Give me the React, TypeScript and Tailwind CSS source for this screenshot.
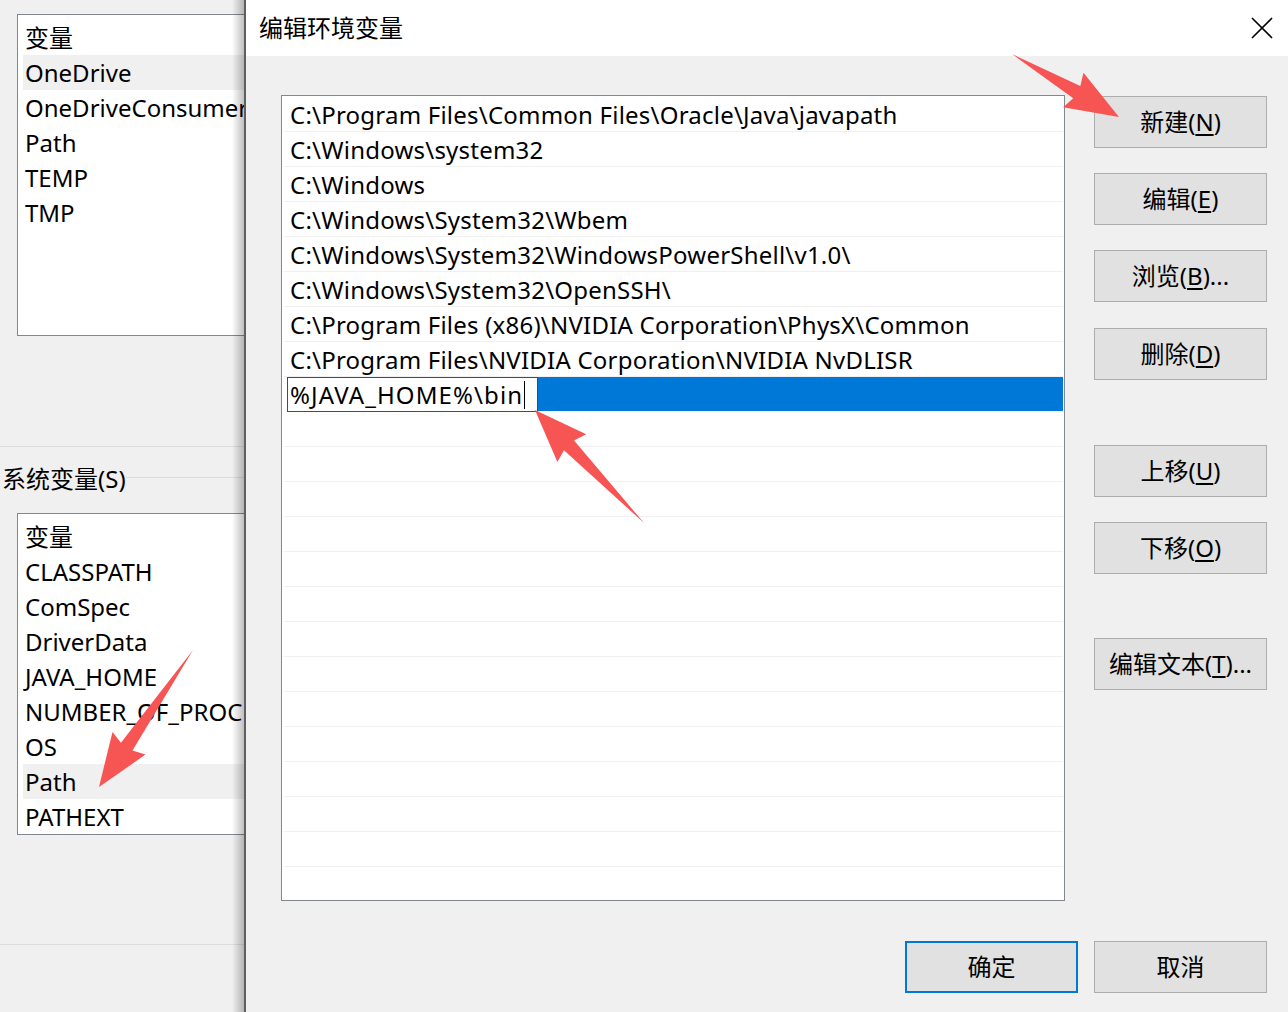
import React from "react";

const FONT = { fontFamily: '"Noto Sans", "Noto Sans CJK SC", sans-serif' };

const userVars = ["OneDrive", "OneDriveConsumer", "Path", "TEMP", "TMP"];
const sysVars = ["CLASSPATH", "ComSpec", "DriverData", "JAVA_HOME", "NUMBER_OF_PROCESSORS", "OS", "Path", "PATHEXT"];

const paths = [
  "C:\\Program Files\\Common Files\\Oracle\\Java\\javapath",
  "C:\\Windows\\system32",
  "C:\\Windows",
  "C:\\Windows\\System32\\Wbem",
  "C:\\Windows\\System32\\WindowsPowerShell\\v1.0\\",
  "C:\\Windows\\System32\\OpenSSH\\",
  "C:\\Program Files (x86)\\NVIDIA Corporation\\PhysX\\Common",
  "C:\\Program Files\\NVIDIA Corporation\\NVIDIA NvDLISR",
];

function VarList({ items, selected }: { items: string[]; selected: string }) {
  return (
    <div className="ml-[17px] w-[400px] h-[322px] border border-[#828790] bg-white pt-[5px] pl-[5px]">
      <div className="h-[35px] leading-[35px] pl-[2px] whitespace-nowrap">变量</div>
      {items.map((v) => (
        <div
          key={v}
          className={`h-[35px] leading-[35px] pl-[2px] whitespace-nowrap ${v === selected ? "bg-[#f0f0f0]" : ""}`}
        >
          {v}
        </div>
      ))}
    </div>
  );
}

function Btn({
  label,
  mn,
  tail = "",
  className = "",
  focused = false,
}: {
  label: string;
  mn?: string;
  tail?: string;
  className?: string;
  focused?: boolean;
}) {
  return (
    <div
      className={`w-[173px] h-[52px] flex items-center justify-center bg-[#e1e1e1] text-[24px] ${
        focused ? "border-2 border-[#0078d7]" : "border border-[#adadad]"
      } ${className}`}
    >
      {label}
      {mn && (
        <>
          (<span className="underline underline-offset-[3px]">{mn}</span>){tail}
        </>
      )}
    </div>
  );
}

function Arrow({ x1, y1, x2, y2 }: { x1: number; y1: number; x2: number; y2: number }) {
  const L = Math.hypot(x2 - x1, y2 - y1);
  const a = (Math.atan2(y2 - y1, x2 - x1) * 180) / Math.PI;
  const pts = `0,0 ${L - 49},-7 ${L - 53},-20 ${L},0 ${L - 53},20 ${L - 49},7`;
  return <polygon points={pts} fill="#f75454" transform={`translate(${x1} ${y1}) rotate(${a})`} />;
}

export default function App() {
  return (
    <div className="relative w-[1288px] h-[1012px] overflow-hidden bg-[#f0f0f0] flex text-black" style={FONT}>
      {/* background window */}
      <div className="relative w-[244px] shrink-0 overflow-hidden text-[24px]">
        <div className="pt-[14px]">
          <VarList items={userVars} selected="OneDrive" />
        </div>
        <div className="mt-[110px] border-t border-[#dcdcdc]" />
        <div className="mt-[16px] flex items-center">
          <span className="pl-[2px] leading-[32px] whitespace-nowrap">系统变量(S)</span>
          <div className="flex-1 border-t border-[#dcdcdc] -mt-[4px]" />
        </div>
        <div className="mt-[18px]">
          <VarList items={sysVars} selected="Path" />
        </div>
        <div className="mt-[109px] border-t border-[#dcdcdc]" />
        <div className="absolute top-0 right-0 h-full w-[12px] bg-gradient-to-r from-transparent to-black/25" />
      </div>
      <div className="w-[2px] shrink-0 bg-[#5f5f5f]" />

      {/* dialog */}
      <div className="flex-1 flex flex-col">
        <div className="h-[56px] bg-white flex items-center justify-between pl-[13px] pr-[15px]">
          <span className="text-[24px]">编辑环境变量</span>
          <svg width="22" height="22" viewBox="0 0 22 22">
            <path d="M1 1L21 21M21 1L1 21" stroke="#000" strokeWidth="1.6" />
          </svg>
        </div>
        <div className="flex pl-[35px] pt-[39px]">
          <div className="w-[784px] h-[806px] border border-[#828790] bg-white overflow-hidden pt-[1px] px-[1px] text-[24px] tracking-[0.22px]">
            {Array.from({ length: 23 }).map((_, i) => {
              if (i === 8) {
                return (
                  <div key={i} className="h-[35px] flex">
                    <div className="relative w-[251px] ml-[4px] h-[35px] border border-[#4a4a4a] bg-white leading-[33px] pl-[2px] whitespace-nowrap tracking-[1.1px]">
                      %JAVA_HOME%\bin
                      <div className="absolute left-[236px] top-[3px] w-[1px] h-[28px] bg-black" />
                    </div>
                    <div className="flex-1 h-[34px] bg-[#0078d7]" />
                  </div>
                );
              }
              return (
                <div
                  key={i}
                  className="h-[35px] leading-[35px] border-b border-[#f0f0f0] ml-[1px] pl-[6px] whitespace-nowrap"
                >
                  {paths[i] ?? ""}
                </div>
              );
            })}
          </div>
          <div className="ml-[29px] flex flex-col">
            <Btn label="新建" mn="N" className="mt-[1px]" />
            <Btn label="编辑" mn="E" className="mt-[25px]" />
            <Btn label="浏览" mn="B" tail="..." className="mt-[25px]" />
            <Btn label="删除" mn="D" className="mt-[26px]" />
            <Btn label="上移" mn="U" className="mt-[65px]" />
            <Btn label="下移" mn="O" className="mt-[25px]" />
            <Btn label="编辑文本" mn="T" tail="..." className="mt-[64px]" />
          </div>
        </div>
        <div className="flex justify-end gap-[16px] pr-[21px] mt-[40px]">
          <Btn label="确定" focused />
          <Btn label="取消" />
        </div>
      </div>

      <svg className="absolute inset-0 pointer-events-none" width="1288" height="1012">
        <Arrow x1={1012} y1={54} x2={1119} y2={117} />
        <Arrow x1={644} y1={523} x2={535} y2={410} />
        <Arrow x1={193} y1={650} x2={99} y2={787} />
      </svg>
    </div>
  );
}
